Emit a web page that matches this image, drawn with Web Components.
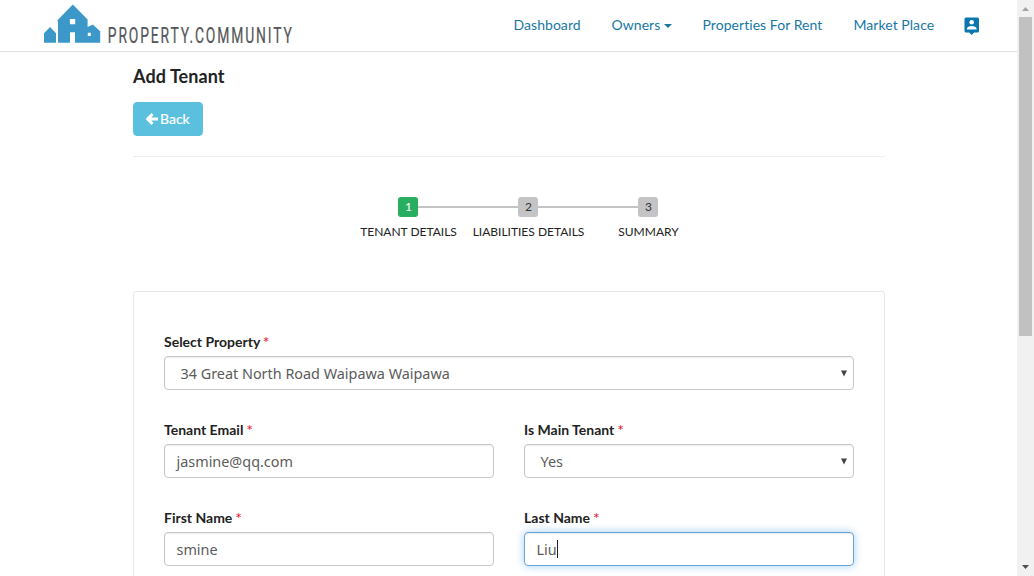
<!DOCTYPE html>
<html lang="en">
<head>
<meta charset="utf-8">
<title>Add Tenant</title>
<style>
html,body{margin:0;height:100%;overflow:hidden;background:#fff}
body{font-family:Lato,"Liberation Sans",sans-serif;font-size:15px;color:#222}
</style>
</head>
<body>
<app-shell>
  <site-header slot="header">
    <nav-link style="--w:68px">Dashboard</nav-link>
    <nav-link caret style="--w:61px">Owners</nav-link>
    <nav-link style="--w:121px">Properties For Rent</nav-link>
    <nav-link style="--w:81px">Market Place</nav-link>
    <account-icon></account-icon>
  </site-header>
  <page-title>Add Tenant</page-title>
  <back-button>Back</back-button>
  <step-list>
    <step-item n="1" active>TENANT DETAILS</step-item>
    <step-item n="2">LIABILITIES DETAILS</step-item>
    <step-item n="3">SUMMARY</step-item>
  </step-list>
  <form-panel>
    <form-field label="Select Property" wide select>34 Great North Road Waipawa Waipawa</form-field>
    <form-field label="Tenant Email">jasmine@qq.com</form-field>
    <form-field label="Is Main Tenant" select>Yes</form-field>
    <form-field label="First Name">smine</form-field>
    <form-field label="Last Name" focused>Liu</form-field>
  </form-panel>
  <scroll-bar slot="scroll"></scroll-bar>
</app-shell>
<script>
function define(name, html) {
  const t = document.createElement('template');
  customElements.define(name, class extends HTMLElement {
    constructor() {
      super();
      t.innerHTML = typeof html === 'function' ? html(this) : html;
      this.attachShadow({mode: 'open'}).append(t.content.cloneNode(true));
    }
  });
}

define('app-shell', `<style>
:host{display:grid;grid-template-columns:minmax(0,1fr) 17px;height:576px;overflow:hidden}
.page{height:576px;overflow:hidden}
main{width:752px;margin-left:133px}
</style><div class="page"><slot name="header"></slot><main><slot></slot></main></div><slot name="scroll"></slot>`);

define('brand-logo', `<style>
:host{display:block;width:270px;height:48px}
svg{display:block;overflow:visible}
text{font-family:Roboto,"Liberation Sans",sans-serif;font-size:22px;fill:#55565a;stroke:#55565a;stroke-width:.25px}
</style><svg width="270" height="48" viewBox="43 3 270 48">
<path fill="#3d98ca" fill-rule="evenodd" d="M44 42.8V33.2L50 27l6 6.2v9.6zM58 42.8V21.5L57.200 20.500 72.800 4.400 87.600 19.600V27L92.800 24.600 100.200 31.300V42.800H75V32.300H70V42.800zM69.900 19H75.200V24.200H69.900zM87.800 32.800V36H90.800V32.800z"/>
<text transform="translate(107.800 42.800) scale(.63 1)" textLength="292" lengthAdjust="spacing">PROPERTY.COMMUNITY</text></svg>`);

define('site-header', `<style>
:host{display:flex;box-sizing:border-box;height:52px;border-bottom:1px solid #e1e1e1;padding:3px 37.500px 0 43px;justify-content:space-between;background:#fff}
nav{display:flex;gap:30px;height:44px;align-items:center}
</style><brand-logo></brand-logo><nav><slot></slot></nav>`);

define('nav-link', `<style>
:host{display:flex;align-items:center;width:var(--w);color:#1878a5;font-size:14px;letter-spacing:.05px;line-height:20px;padding-bottom:1px;white-space:nowrap}
i{display:none;border:4px solid transparent;border-top-color:#1878a5;border-bottom:0;margin:3px 0 0 4px}
:host([caret]) i{display:block}
</style><slot></slot><i></i>`);

define('account-icon', `<style>:host{display:block;width:16px;height:18px;margin-left:-1px;padding-top:1px}svg{display:block}</style>
<svg width="16" height="18" viewBox="0 0 16 18"><path fill="#0b77ad" d="M2 .5h11.500A1.500 1.500 0 0 1 15 2v12a1.500 1.500 0 0 1-1.500 1.500H10.200L7.700 18 5.200 15.500H2A1.500 1.500 0 0 1 .5 14V2A1.500 1.500 0 0 1 2 .5z"/><circle cx="7.700" cy="5.300" r="2.300" fill="#fff"/><path fill="#fff" d="M3 12.500v-.9C3 9.900 6 9 7.700 9s4.800.9 4.800 2.600v.9z"/></svg>`);

define('page-title', `<style>:host{display:block;font-size:18px;font-weight:700;letter-spacing:.08px;line-height:24px;padding-top:12px;color:#222}</style><slot></slot>`);

define('back-button', `<style>
:host{display:block;margin-top:14px;padding-bottom:20px;border-bottom:1px solid #eee}
button{display:flex;align-items:center;box-sizing:border-box;width:70px;height:34px;padding:0 0 0 11.500px;border:1px solid #5bc0de;border-radius:4px;background:#5bc0de;color:#fff;font:14px/20px Lato,sans-serif;-webkit-text-stroke:.2px #fff}
svg{margin-right:2.500px}
</style><button><svg width="12" height="14" viewBox="0 0 12 14"><path d="M6.500 2 1.700 7l4.800 5M2 7h10" fill="none" stroke="#fff" stroke-width="3"/></svg><slot></slot></button>`);

define('step-list', `<style>:host{display:flex;width:360px;margin:40px 0 0 215px}</style><slot></slot>`);

define('step-item', el => `<style>
:host{display:grid;grid-template-columns:1fr 20px 1fr;width:120px;row-gap:5px;align-items:center;color:#333}
i{height:2px;background:#c4c4c6}
:host(:first-child) i:first-of-type,:host(:last-child) i:last-of-type{visibility:hidden}
b{height:20px;border-radius:3px;background:#c4c4c6;text-align:center;font-size:12px;font-weight:400;line-height:20px;text-indent:1px}
:host([active]) b{background:#27ae60;color:#fff}
span{grid-column:1/4;justify-self:center;white-space:nowrap;font-size:12px;line-height:20px;color:#222;padding-left:1px}
</style><i></i><b>${el.getAttribute('n')}</b><i></i><span><slot></slot></span>`);

define('form-panel', `<style>
:host{display:grid;grid-template-columns:330px 330px;gap:28px 30px;box-sizing:border-box;width:752px;height:400px;align-content:start;margin-top:49px;padding:40px 30px;border:1px solid #e7e7e7;border-radius:3px}
</style><slot></slot>`);

define('form-field', el => `<style>
:host{display:block;height:60px}
:host([wide]){grid-column:1/3}
label{display:block;height:20px;margin-bottom:4px;font-size:14px;font-weight:700;line-height:20px;color:#222}
em{font-style:normal;font-weight:400;font-size:16px;line-height:1px;margin-left:-.5px;vertical-align:-1px;color:#e8112d}
.box{display:flex;align-items:center;box-sizing:border-box;height:34px;padding:0 6px 0 11.500px;border:1px solid #c6c6c6;border-radius:4px;box-shadow:inset 0 1px 1px rgba(0,0,0,.06);font:14.400px/20px "Noto Sans",sans-serif;color:#5b5b5b}
.box span{padding-top:2px}
:host([select]) .box{padding-left:15.500px}
:host([focused]) .box{border-color:#66a4d9;box-shadow:inset 0 1px 1px rgba(0,0,0,.075),0 0 8px rgba(102,175,233,.6)}
.arrow{display:none;margin-left:auto}
:host([select]) .arrow{display:block}
.caret{display:none;width:1px;height:18px;background:#222}
:host([focused]) .caret{display:block}
</style><label>${el.getAttribute('label')} <em>*</em></label><div class="box"><span><slot></slot></span><i class="caret"></i><svg class="arrow" width="6" height="7" viewBox="0 0 6 7"><path fill="#444" d="M0 .5h6L3 6.500z"/></svg></div>`);

define('scroll-bar', `<style>
:host{display:flex;flex-direction:column;align-items:center;box-sizing:border-box;height:576px;background:#f1f1f1}
svg{display:block;flex:none}
div{width:13px;height:319px;background:#c1c1c1;margin-bottom:auto}
</style><svg width="17" height="17"><path fill="#a3a3a3" d="M5 11 8.500 7 12 11z"/></svg><div></div><svg width="17" height="17"><path fill="#505050" d="M5 6h7L8.500 10z"/></svg>`);
</script>
</body>
</html>
